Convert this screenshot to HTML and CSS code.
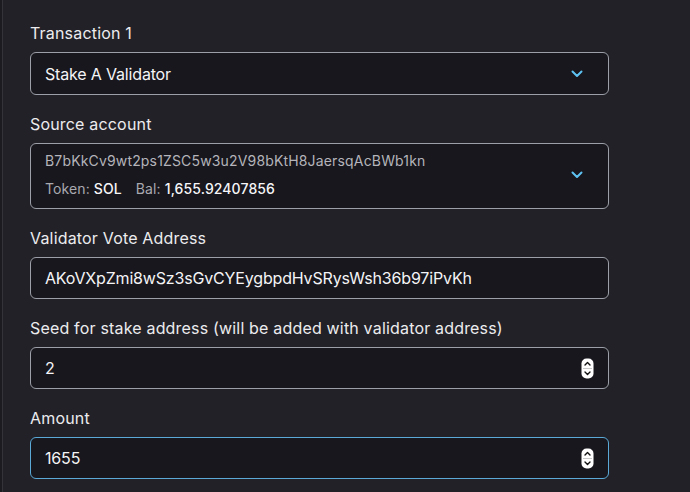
FILE: index.html
```html
<!DOCTYPE html>
<html>
<head>
<meta charset="utf-8">
<link rel="stylesheet" href="styles.css">
</head>
<body>
<div class="panel">
  <form class="form">
    <div class="field">
      <div class="label">Transaction 1</div>
      <div class="box select">
        <span class="value">Stake A Validator</span>
        <svg class="chev" width="12" height="8" viewBox="0 0 12 8"><path d="M1.5 1.5 L6 6 L10.5 1.5" fill="none" stroke="#5ec2f2" stroke-width="2" stroke-linecap="round" stroke-linejoin="round"/></svg>
      </div>
    </div>
    <div class="field">
      <div class="label">Source account</div>
      <div class="box select account">
        <div class="lines">
          <div class="addr">B7bKkCv9wt2ps1ZSC5w3u2V98bKtH8JaersqAcBWb1kn</div>
          <div class="meta"><span class="muted">Token:</span> <span class="strong">SOL</span><span class="muted bal">Bal:</span> <span class="strong">1,655.92407856</span></div>
        </div>
        <svg class="chev" width="12" height="8" viewBox="0 0 12 8"><path d="M1.5 1.5 L6 6 L10.5 1.5" fill="none" stroke="#5ec2f2" stroke-width="2" stroke-linecap="round" stroke-linejoin="round"/></svg>
      </div>
    </div>
    <div class="field">
      <div class="label">Validator Vote Address</div>
      <div class="box">
        <span class="value">AKoVXpZmi8wSz3sGvCYEygbpdHvSRysWsh36b97iPvKh</span>
      </div>
    </div>
    <div class="field">
      <div class="label">Seed for stake address (will be added with validator address)</div>
      <div class="box">
        <span class="value">2</span>
        <svg class="spin" width="13" height="21" viewBox="0 0 13 21"><rect x="0.5" y="0.5" width="12" height="20" rx="5" fill="#ffffff"/><line x1="2" y1="10.5" x2="11" y2="10.5" stroke="#c8c8c8" stroke-width="1"/><path d="M4 7 L6.5 4.5 L9 7" fill="none" stroke="#111" stroke-width="1.4" stroke-linecap="round" stroke-linejoin="round"/><path d="M4 14 L6.5 16.5 L9 14" fill="none" stroke="#111" stroke-width="1.4" stroke-linecap="round" stroke-linejoin="round"/></svg>
      </div>
    </div>
    <div class="field">
      <div class="label">Amount</div>
      <div class="box focus">
        <span class="value">1655</span>
        <svg class="spin" width="13" height="21" viewBox="0 0 13 21"><rect x="0.5" y="0.5" width="12" height="20" rx="5" fill="#ffffff"/><line x1="2" y1="10.5" x2="11" y2="10.5" stroke="#c8c8c8" stroke-width="1"/><path d="M4 7 L6.5 4.5 L9 7" fill="none" stroke="#111" stroke-width="1.4" stroke-linecap="round" stroke-linejoin="round"/><path d="M4 14 L6.5 16.5 L9 14" fill="none" stroke="#111" stroke-width="1.4" stroke-linecap="round" stroke-linejoin="round"/></svg>
      </div>
    </div>
  </form>
</div>
</body>
</html>
```

FILE: styles.css
```css
html, body {
  margin: 0;
  padding: 0;
  height: 100%;
}
body {
  background: #1c1b20;
  padding-left: 2px;
  font-family: Inter, "Noto Sans", sans-serif;
  overflow: hidden;
}
.panel {
  background: #222128;
  border-left: 1px solid #34333a;
  height: 100%;
  box-sizing: border-box;
  padding: 23px 0 0 27px;
}
.form {
  width: 579px;
  display: flex;
  flex-direction: column;
  gap: 19px;
}
.field {
  display: flex;
  flex-direction: column;
  gap: 9px;
}
.label {
  font-size: 16px;
  line-height: 20px;
  color: #ececee;
  letter-spacing: 0.18px;
}
.box {
  box-sizing: border-box;
  height: 42px;
  border: 1px solid #9c9fa7;
  border-radius: 6px;
  background: #18171d;
  display: flex;
  align-items: center;
  justify-content: space-between;
  padding: 0 14px 0 14px;
  color: #f4f4f6;
  font-size: 16px;
}
.select {
  height: 43px;
  padding-right: 25px;
}
.box.focus {
  border-color: #5aa9d6;
}
.value {
  line-height: 20px;
  letter-spacing: -0.17px;
}
.account {
  height: auto;
  padding-top: 7px;
  padding-bottom: 9px;
}
.lines {
  display: flex;
  flex-direction: column;
  gap: 8px;
  font-size: 14px;
  line-height: 20px;
}
.addr {
  color: #b4b4ba;
  letter-spacing: 0.16px;
}
.meta {
  letter-spacing: 0.1px;
}
.muted {
  color: #a9a9b0;
}
.strong {
  color: #f6f6f8;
  font-weight: 500;
}
.bal {
  margin-left: 14px;
}
.chev {
  display: block;
}
.spin {
  display: block;
}
```
